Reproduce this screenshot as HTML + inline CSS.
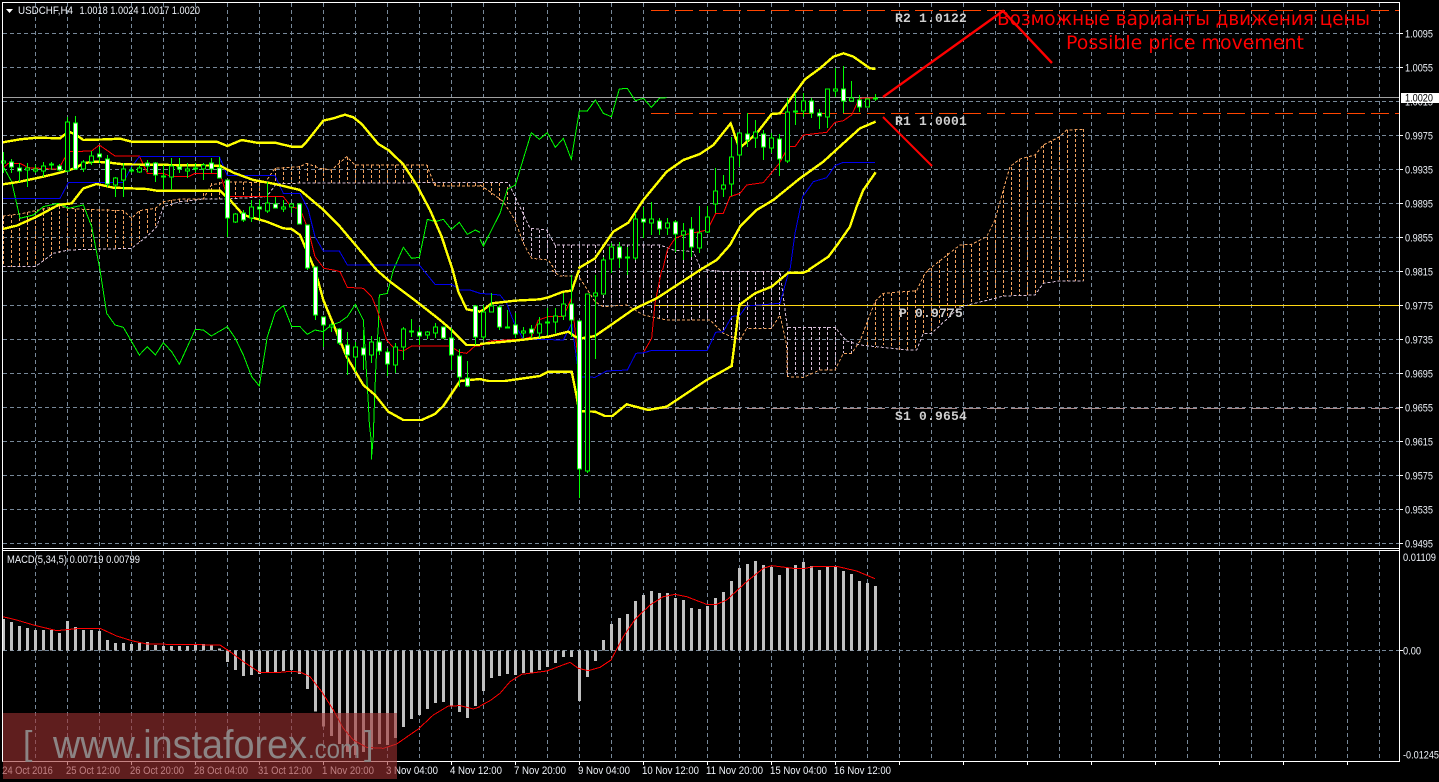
<!DOCTYPE html>
<html><head><meta charset="utf-8"><title>USDCHF,H4</title>
<style>
html,body{margin:0;padding:0;background:#000;width:1439px;height:782px;overflow:hidden}
svg{display:block}
polyline{fill:none;vector-effect:non-scaling-stroke;shape-rendering:crispEdges}
.y{stroke:#ff0;stroke-width:2.4}
.g{stroke:#0f0;stroke-width:1}
.r{stroke:#f00;stroke-width:1}
.b{stroke:#0000f0;stroke-width:1}
.o{stroke:#f4a460;stroke-width:1;stroke-dasharray:3 2}
.t{stroke:#d8bfd8;stroke-width:1;stroke-dasharray:3 2}
text{font-family:"Liberation Sans",Arial,sans-serif;font-size:11px;fill:#eef2f8}
.f{font-family:"Liberation Mono",monospace;font-weight:bold;font-size:13px;fill:#cfcfcf;letter-spacing:.2px}
.a{font-family:"DejaVu Sans","Liberation Sans",sans-serif;font-size:19px;fill:#f00}
</style></head><body>
<svg width="1439" height="782" viewBox="0 0 1439 782" xmlns="http://www.w3.org/2000/svg" shape-rendering="crispEdges">
<rect width="1439" height="782" fill="#000"/>

<!-- grid -->
<path fill="none" stroke="#778899" stroke-dasharray="4 3" d="M35.5 3V548M99.5 3V548M163.5 3V548M227.5 3V548M291.5 3V548M355.5 3V548M419.5 3V548M483.5 3V548M547.5 3V548M611.5 3V548M675.5 3V548M739.5 3V548M803.5 3V548M867.5 3V548M931.5 3V548M995.5 3V548M1059.5 3V548M1123.5 3V548M1187.5 3V548M1251.5 3V548M1315.5 3V548M1379.5 3V548M67.5 3V548M131.5 3V548M195.5 3V548M259.5 3V548M323.5 3V548M387.5 3V548M451.5 3V548M515.5 3V548M579.5 3V548M643.5 3V548M707.5 3V548M771.5 3V548M835.5 3V548M899.5 3V548M963.5 3V548M1027.5 3V548M1091.5 3V548M1155.5 3V548M1219.5 3V548M1283.5 3V548M1347.5 3V548
M35.5 551V761M99.5 551V761M163.5 551V761M227.5 551V761M291.5 551V761M355.5 551V761M419.5 551V761M483.5 551V761M547.5 551V761M611.5 551V761M675.5 551V761M739.5 551V761M803.5 551V761M867.5 551V761M931.5 551V761M995.5 551V761M1059.5 551V761M1123.5 551V761M1187.5 551V761M1251.5 551V761M1315.5 551V761M1379.5 551V761M67.5 551V761M131.5 551V761M195.5 551V761M259.5 551V761M323.5 551V761M387.5 551V761M451.5 551V761M515.5 551V761M579.5 551V761M643.5 551V761M707.5 551V761M771.5 551V761M835.5 551V761M899.5 551V761M963.5 551V761M1027.5 551V761M1091.5 551V761M1155.5 551V761M1219.5 551V761M1283.5 551V761M1347.5 551V761
M3 33.5H1399M3 67.5H1399M3 101.5H1399M3 135.5H1399M3 169.5H1399M3 203.5H1399M3 237.5H1399M3 271.5H1399M3 305.5H1399M3 339.5H1399M3 373.5H1399M3 407.5H1399M3 441.5H1399M3 475.5H1399M3 509.5H1399M3 543.5H1399M3 650.5H1399"/>

<!-- objects -->
<path stroke="#ff4500" fill="none" stroke-dasharray="18 6" d="M651 10.5H1399M651 113.5H1399"/>
<path stroke="#a88888" fill="none" stroke-dasharray="18 6" d="M651 408.5H1399"/>
<path stroke="#ffd815" fill="none" d="M655 305.5H1399"/>
<path stroke="#a0a0a0" fill="none" d="M3 97.5H1400"/>

<!-- cloud hatch -->
<path fill="none" stroke="#f4a460" stroke-dasharray="3 2" d="M3.5 216V267M11.5 215V267M19.5 213V267M27.5 212V267M35.5 211V267M43.5 208V263M51.5 207V258M59.5 206V253M67.5 208V250M75.5 209V250M83.5 209V250M91.5 209V250M99.5 209V250M107.5 209V249M115.5 210V249M123.5 211V248M131.5 218V248M139.5 211V242M147.5 210V235M155.5 208V227M163.5 201V207M171.5 200V206M179.5 199V204M187.5 199V202M195.5 199V201M203.5 193V199M211.5 183V199M219.5 182V199M227.5 182V199M235.5 182V198M243.5 182V197M251.5 183V197M259.5 183V197M267.5 183V197M275.5 168V183M283.5 167V183M291.5 167V183M299.5 166V183M307.5 163V183M315.5 165V183M323.5 168V183M331.5 170V183M339.5 160V183M347.5 157V183M355.5 165V183M363.5 165V183M371.5 165V183M379.5 165V183M387.5 165V183M395.5 165V183M403.5 165V183M411.5 165V183M419.5 165V183M427.5 165V183M435.5 183V186M443.5 183V186M451.5 183V186M459.5 183V186M467.5 183V186M475.5 183V186M483.5 183V190M491.5 183V195M499.5 183V200M507.5 187V203
M867.5 322V347M875.5 302V348M883.5 293V345M891.5 293V348M899.5 292V350M907.5 292V350M915.5 290V350M923.5 275V333M931.5 268V333M939.5 260V325M947.5 253V318M955.5 250V310M963.5 245V305M971.5 244V303M979.5 243V300M987.5 237V298M995.5 220V298M1003.5 190V296M1011.5 167V295M1019.5 159V295M1027.5 157V295M1035.5 155V295M1043.5 145V283M1051.5 141V281M1059.5 137V281M1067.5 130V281M1075.5 129V281M1083.5 129V281"/>
<path fill="none" stroke="#d8bfd8" stroke-dasharray="3 2" d="M515.5 197V220M523.5 207V243M531.5 228V258M539.5 230V260M547.5 230V260M555.5 245V276M563.5 245V276M571.5 245V276M579.5 245V278M587.5 245V285M595.5 245V302M603.5 245V307M611.5 245V306M619.5 245V305M627.5 245V305M635.5 245V310M643.5 245V315M651.5 245V315M659.5 245V318M667.5 250V320M675.5 250V320M683.5 250V320M691.5 252V320M699.5 265V320M707.5 270V320M715.5 270V322M723.5 272V332M731.5 272V338M739.5 272V340M747.5 272V328M755.5 272V328M763.5 272V328M771.5 272V328M779.5 272V315M787.5 327V377M795.5 327V377M803.5 327V377M811.5 327V372M819.5 327V370M827.5 327V370M835.5 327V370M843.5 341V353M851.5 341V353"/>

<!-- cloud borders -->
<g transform="scale(.33333)">
<polyline class="o" points="8,648 60,642 106,632 154,622 178,618 202,625 250,628 370,632 395,655 418,632 466,625 490,605 540,597 610,597 634,555 680,545 795,548 825,505 900,500 920,490 960,505 995,510 1040,470 1065,495 1280,495 1305,558 1440,558"/>
<polyline class="t" points="8,800 106,800 160,760 205,750 395,745 440,710 470,680 490,620 540,605 610,597 680,597 800,590 830,550 1305,548 1440,548"/>
</g>
<g transform="translate(480 0) scale(.33333)">
<polyline class="t" points="0,548 85,548 105,590 150,685 200,690 225,735 540,735 580,750 640,755 660,800 680,810"/>
<polyline class="o" points="0,555 30,575 70,605 105,660 130,730 155,775 205,780 225,810"/>
</g>
<g transform="translate(480 270) scale(.33333)">
<polyline class="o" points="215,0 240,18 275,18 300,25 345,95 370,110 440,105 490,135 560,150 690,150 730,190 780,210 800,175 875,175 900,135 920,225 922,320 970,322 1020,300 1065,300 1090,250 1115,250 1140,213 1185,95 1210,70 1310,62 1335,10 1345,0"/>
<polyline class="t" points="680,0 730,5 900,5 922,172 1065,172 1100,213 1140,225 1285,240 1310,240 1330,190 1355,190 1440,110"/>
</g>
<g transform="translate(960 0) scale(.33333)">
<polyline class="o" points="-96,810 0,735 35,733 80,710 105,660 130,570 150,500 180,477 225,465 250,435 300,410 320,390 370,388"/>
<polyline class="t" points="0,921 105,895 130,888 225,885 250,850 298,843 370,843"/>
</g>

<!-- chikou / kijun / tenkan / bollinger -->
<g transform="scale(.33333)">
<polyline class="g" points="8,455 10,500 35,545 60,655 100,645 130,620 175,610 205,625 250,615 275,680 300,810"/>
<polyline class="g" points="1180,810 1210,742 1235,775 1258,772 1282,658 1306,665 1330,658 1354,688 1378,667 1402,703 1426,690 1440,697"/>
<polyline class="r" points="8,505 25,490 60,490 85,503 175,508 205,455 275,453 298,435 345,468 418,468 442,520 490,520 515,530 565,530 585,520 660,520 682,590 850,590 875,622 900,625 925,690 945,770 972,805 1000,810"/>
<polyline class="b" points="8,595 180,595 205,548 370,547 395,500 418,470 658,470 682,527 825,527 850,580 900,580 925,630 945,710 970,753 1018,753 1042,795 1258,795 1270,810"/>
<polyline class="y" points="8,427 60,418 110,413 180,415 205,395 225,402 250,420 320,418 360,416 395,425 650,425 682,438 725,420 770,428 825,428 875,440 905,440 920,425 970,362 1000,355 1035,344 1060,352 1085,372 1135,432 1165,450 1210,493 1250,555 1290,630 1325,710 1358,810"/>
<polyline class="y" points="8,553 60,545 130,530 180,518 225,505 250,490 280,485 320,487 370,493 660,497 700,518 760,540 825,552 900,570 965,625 1020,680 1130,810"/>
<polyline class="y" points="8,687 50,677 110,650 175,615 215,610 250,565 290,552 340,563 440,567 470,572 660,572 690,600 730,645 800,665 850,685 875,687 900,705 945,810"/>
</g>
<g transform="translate(0 270) scale(.33333)">
<polyline class="g" points="300,0 320,130 345,165 370,172 418,255 442,230 466,255 490,218 515,245 538,283 586,178 610,180 634,198 682,170 706,205 730,255 755,320 778,348 802,200 826,127 850,107 875,170 900,170 922,193 945,180 970,185 994,165 1018,157 1042,140 1066,103 1090,150 1105,400 1108,460 1114,515 1114,568 1120,500 1122,435 1127,305 1130,240 1135,170 1138,75 1162,70 1180,0"/>
<polyline class="r" points="1000,0 1020,5 1042,52 1090,55 1115,80 1130,115 1160,210 1185,238 1210,243 1235,228 1350,228 1380,247 1400,250 1425,228 1440,228"/>
<polyline class="b" points="1270,0 1305,43 1355,43 1380,60 1410,60 1440,70"/>
<polyline class="y" points="1358,0 1375,65 1400,118 1440,125"/>
<polyline class="y" points="1130,0 1170,35 1250,95 1320,150 1355,180 1400,225 1440,225"/>
<polyline class="y" points="945,0 970,90 1040,260 1090,345 1125,375 1165,425 1210,450 1265,450 1305,432 1330,408 1380,333 1440,327"/>
</g>
<g transform="translate(480 0) scale(.33333)">
<polyline class="g" points="0,718 10,738 60,640 82,568 106,555 154,398 178,418 202,398 226,442 250,415 274,478 298,333 322,333 346,300 370,340 394,350 418,267 442,265 466,302 490,295 514,322 538,295 560,293"/>
<polyline class="r" points="548,810 562,750 585,715 610,705 682,690 707,640 730,640 750,590 780,580 800,555 850,548 898,490 925,440 945,440 970,405 1040,397 1065,367 1090,362 1115,345 1138,295 1187,293"/>
<polyline class="b" points="930,810 945,700 968,590 1000,545 1040,533 1065,497 1090,487 1185,487"/>
<polyline class="y" points="295,805 345,775 400,695 445,668 490,600 560,515 610,480 660,462 700,435 752,370 778,445 830,400 875,342 900,340 975,238 1020,205 1060,170 1090,160 1120,170 1170,205 1187,207"/>
<polyline class="y" points="660,810 710,780 750,735 780,680 830,630 880,600 960,535 1030,485 1090,430 1140,385 1187,365"/>
<polyline class="y" points="985,810 1045,770 1075,730 1110,680 1130,620 1150,570 1187,517"/>
</g>
<g transform="translate(480 270) scale(.33333)">
<polyline class="r" points="0,228 30,213 80,210 130,207 155,200 175,150 205,140 250,140 272,90 280,130 297,300"/>
<polyline class="r" points="490,248 515,205 525,100 545,0"/>
<polyline class="b" points="0,70 60,75 80,100 105,165 130,207 250,210 275,160 297,320 345,322 380,303 442,300 468,250 493,248 515,241 682,241 707,187 730,185 755,140 780,135 800,108 900,100 925,10 928,0"/>
<polyline class="y" points="0,125 10,120 35,100 105,92 180,88 205,82 250,65 275,62 297,0"/>
<polyline class="y" points="0,222 105,212 205,200 265,185 285,200 305,205 345,198 400,160 460,118 530,85 660,0"/>
<polyline class="y" points="0,327 25,333 75,333 130,325 180,318 205,305 275,305 290,380 297,423 345,425 375,438 397,438 440,403 505,420 560,410 620,370 680,330 755,288 765,210 778,105 825,70 875,50 925,8 970,8 990,0"/>
</g>

<!-- candle wicks -->
<path fill="none" stroke="#0f0" d="M3.5 152V173M11.5 159V173M19.5 163V182M27.5 163V187M35.5 165V173M43.5 162V177M51.5 162V170M59.5 164V171M67.5 117V172M75.5 116V170M83.5 160V172M91.5 151V165M99.5 147V163M107.5 155V187M115.5 177V197M123.5 163V197M131.5 167V173M139.5 165V173M147.5 160V172M155.5 162V182M163.5 165V190M171.5 158V190M179.5 158V173M187.5 163V178M195.5 163V172M203.5 163V180M211.5 158V173M219.5 157V178M227.5 180V237M235.5 213V223M243.5 210V222M251.5 200V222M259.5 200V220M267.5 182V213M275.5 197V208M283.5 200V212M291.5 203V213M299.5 203V224M307.5 225V270M315.5 267V320M323.5 317V347M331.5 323V332M339.5 328V345M347.5 332V375M355.5 342V372M363.5 330V370M371.5 336V363M379.5 337V355M387.5 348V376M395.5 343V373M403.5 327V360M411.5 319V337M419.5 327V345M427.5 331V339M435.5 323V338M443.5 327V339M451.5 328V370M459.5 349V387M467.5 361V387M475.5 305V345M483.5 305V340M491.5 293V312M499.5 305V330M507.5 310V328M515.5 313V338M523.5 327V338M531.5 325V338M539.5 317V338M547.5 308V335M555.5 308V333M563.5 293V320M571.5 275V337M579.5 320V498M587.5 294V473M595.5 275V359M603.5 257V294M611.5 243V273M619.5 242V268M627.5 247V275M635.5 213V260M643.5 207V238M651.5 202V235M659.5 218V235M667.5 218V235M675.5 220V252M683.5 223V260M691.5 217V257M699.5 206V253M707.5 206V233M715.5 168V213M723.5 175V197M731.5 137V196M739.5 133V167M747.5 113V147M755.5 120V148M763.5 130V160M771.5 133V153M779.5 134V176M787.5 98V163M795.5 93V125M803.5 93V117M811.5 98V118M819.5 109V129M827.5 89V128M835.5 68V97M843.5 66V113M851.5 81V102M859.5 95V112M867.5 98V107M875.5 94V101"/>
<!-- hollow bodies -->
<path fill="#000" stroke="#0f0" d="M1.5 161h4V163h-4zM25.5 168h4V170h-4zM33.5 169h4V171h-4zM41.5 166h4V171h-4zM49.5 164h4V165h-4zM65.5 122h4V171h-4zM81.5 162h4V169h-4zM89.5 156h4V162h-4zM113.5 178h4V185h-4zM121.5 169h4V180h-4zM129.5 170h4V171h-4zM137.5 168h4V172h-4zM161.5 176h4V177h-4zM169.5 166h4V177h-4zM185.5 169h4V171h-4zM193.5 168h4V169h-4zM201.5 165h4V169h-4zM233.5 214h4V222h-4zM249.5 207h4V218h-4zM265.5 203h4V211h-4zM281.5 207h4V209h-4zM289.5 204h4V207h-4zM329.5 325h4V327h-4zM353.5 347h4V357h-4zM369.5 342h4V355h-4zM393.5 347h4V365h-4zM401.5 329h4V347h-4zM409.5 331h4V332h-4zM425.5 332h4V335h-4zM433.5 327h4V333h-4zM481.5 312h4V337h-4zM489.5 306h4V312h-4zM505.5 327h4V328h-4zM521.5 331h4V333h-4zM537.5 324h4V333h-4zM545.5 322h4V323h-4zM553.5 316h4V322h-4zM561.5 304h4V316h-4zM585.5 294h4V471h-4zM593.5 293h4V296h-4zM601.5 260h4V294h-4zM609.5 247h4V259h-4zM625.5 257h4V258h-4zM633.5 219h4V258h-4zM649.5 219h4V223h-4zM665.5 223h4V228h-4zM681.5 231h4V235h-4zM697.5 233h4V248h-4zM705.5 217h4V232h-4zM713.5 191h4V204h-4zM721.5 185h4V189h-4zM729.5 157h4V184h-4zM737.5 133h4V155h-4zM753.5 132h4V138h-4zM769.5 138h4V148h-4zM785.5 112h4V161h-4zM793.5 111h4V112h-4zM801.5 101h4V111h-4zM825.5 89h4V117h-4zM833.5 89h4V91h-4zM849.5 98h4V101h-4zM865.5 99h4V107h-4zM873.5 98h4V99h-4z"/>
<!-- filled bodies -->
<path fill="#fff" stroke="#0f0" d="M9.5 162h4V167h-4zM17.5 168h4V171h-4zM57.5 166h4V170h-4zM73.5 123h4V169h-4zM97.5 154h4V157h-4zM105.5 159h4V184h-4zM145.5 163h4V166h-4zM153.5 163h4V175h-4zM177.5 167h4V169h-4zM209.5 163h4V169h-4zM217.5 168h4V178h-4zM225.5 180h4V218h-4zM241.5 213h4V220h-4zM257.5 207h4V209h-4zM273.5 204h4V208h-4zM297.5 204h4V224h-4zM305.5 225h4V268h-4zM313.5 267h4V315h-4zM321.5 317h4V325h-4zM337.5 329h4V343h-4zM345.5 345h4V355h-4zM361.5 348h4V355h-4zM377.5 342h4V351h-4zM385.5 352h4V364h-4zM417.5 332h4V336h-4zM441.5 327h4V338h-4zM449.5 338h4V355h-4zM457.5 356h4V377h-4zM465.5 378h4V386h-4zM473.5 306h4V337h-4zM497.5 307h4V327h-4zM513.5 325h4V334h-4zM529.5 329h4V333h-4zM569.5 304h4V320h-4zM577.5 321h4V469h-4zM617.5 247h4V258h-4zM641.5 219h4V222h-4zM657.5 221h4V229h-4zM673.5 222h4V234h-4zM689.5 229h4V247h-4zM745.5 134h4V140h-4zM761.5 134h4V147h-4zM777.5 139h4V159h-4zM809.5 101h4V113h-4zM817.5 113h4V116h-4zM841.5 89h4V101h-4zM857.5 100h4V107h-4z"/>

<!-- red arrows -->
<g shape-rendering="auto">
<path fill="none" stroke="#f00" stroke-width="2.4" d="M883 97L1003 11L1052 63"/>
<path fill="none" stroke="#f00" stroke-width="2" d="M883 117L932 166"/>
</g>

<!-- MACD histogram -->
<g transform="translate(0 540) scale(.33333)">
<path fill="none" stroke="#c0c0c0" stroke-width="3" style="vector-effect:non-scaling-stroke" d="M10.5 331V237M34.5 331V246M58.5 331V258M82.5 331V264M106.5 331V270M130.5 331V270M154.5 331V270M178.5 331V279M202.5 331V243M226.5 331V261M250.5 331V270M274.5 331V270M298.5 331V273M322.5 331V300M346.5 331V309M370.5 331V309M394.5 331V312M418.5 331V309M442.5 331V306M466.5 331V315M490.5 331V318M514.5 331V318M538.5 331V318M562.5 331V318M586.5 331V315M610.5 331V312M634.5 331V315M658.5 331V325M682.5 331V366M706.5 331V390M730.5 331V408M754.5 331V405M778.5 331V402M802.5 331V399M826.5 331V396M850.5 331V393M874.5 331V390M898.5 331V402M922.5 331V447M946.5 331V514M970.5 331V560M994.5 331V588M1018.5 331V612M1042.5 331V636M1066.5 331V645M1090.5 331V636M1114.5 331V628M1138.5 331V612M1162.5 331V615M1186.5 331V594M1210.5 331V561M1234.5 331V537M1258.5 331V525M1282.5 331V507M1306.5 331V489M1330.5 331V486M1354.5 331V497M1378.5 331V516M1402.5 331V534M1426.5 331V498"/>
<polyline class="r" points="8,230 50,240 100,255 170,272 210,268 240,265 300,265 350,288 395,302 440,312 660,315 690,335 730,365 780,398 830,398 870,394 900,396 930,410 965,455 1000,510 1030,565 1060,600 1100,622 1150,625 1190,612 1255,567 1300,525 1345,498 1380,497 1420,507 1440,500"/>
</g>
<g transform="translate(480 540) scale(.33333)">
<path fill="none" stroke="#c0c0c0" stroke-width="3" style="vector-effect:non-scaling-stroke" d="M10.5 331V453M34.5 331V414M58.5 331V408M82.5 331V402M106.5 331V405M130.5 331V399M154.5 331V399M178.5 331V390M202.5 331V381M226.5 331V369M250.5 331V351M274.5 331V351M298.5 331V483M322.5 331V411M346.5 331V363M370.5 331V300M394.5 331V252M418.5 331V234M442.5 331V222M466.5 331V183M490.5 331V165M514.5 331V153M538.5 331V159M562.5 331V159M586.5 331V174M610.5 331V180M634.5 331V204M658.5 331V207M682.5 331V198M706.5 331V174M730.5 331V156M754.5 331V123M778.5 331V84M802.5 331V72M826.5 331V63M850.5 331V75M874.5 331V81M898.5 331V105M922.5 331V84M946.5 331V75M970.5 331V66M994.5 331V78M1018.5 331V90M1042.5 331V81M1066.5 331V78M1090.5 331V93M1114.5 331V102M1138.5 331V123M1162.5 331V129M1186.5 331V138"/>
<polyline class="r" points="0,498 30,482 60,460 90,425 125,403 200,393 270,367 295,385 325,392 360,382 393,360 430,290 465,238 510,195 550,170 585,163 620,170 680,193 710,193 740,180 800,125 850,85 875,77 940,85 975,85 1005,79 1070,79 1130,93 1185,116"/>
</g>

<!-- frames -->
<path fill="none" stroke="#fff" d="M2.5 761.5V2.5H1399.5V761.5H2.5M2.5 548.5H1399.5M2.5 550.5H1399.5"/>
<path fill="none" stroke="#fff" d="M1400 33.5h3M1400 67.5h3M1400 135.5h3M1400 169.5h3M1400 203.5h3M1400 237.5h3M1400 271.5h3M1400 305.5h3M1400 339.5h3M1400 373.5h3M1400 407.5h3M1400 441.5h3M1400 475.5h3M1400 509.5h3M1400 543.5h3M1400 650.5h3M67.5 762v3M131.5 762v3M195.5 762v3M259.5 762v3M323.5 762v3M387.5 762v3M451.5 762v3M515.5 762v3M579.5 762v3M643.5 762v3M707.5 762v3M771.5 762v3M835.5 762v3M899.5 762v3M963.5 762v3M1027.5 762v3M1091.5 762v3M1155.5 762v3M1219.5 762v3M1283.5 762v3M1347.5 762v3"/>
<path fill="#fff" d="M6 9h7l-3.5 4z" shape-rendering="auto"/>

<!-- header text -->
<g shape-rendering="auto">
<text x="18" y="14" textLength="55" lengthAdjust="spacingAndGlyphs">USDCHF,H4</text>
<text x="79.5" y="14" textLength="120.5" lengthAdjust="spacingAndGlyphs">1.0018 1.0024 1.0017 1.0020</text>
<text x="7" y="563" textLength="133" lengthAdjust="spacingAndGlyphs">MACD(5,34,5) 0.00719 0.00799</text>

<!-- price axis -->
<text x="1405" y="37.5" textLength="28" lengthAdjust="spacingAndGlyphs">1.0095</text>
<text x="1405" y="71.5" textLength="28" lengthAdjust="spacingAndGlyphs">1.0055</text>
<text x="1405" y="105.5" textLength="28" lengthAdjust="spacingAndGlyphs">1.0015</text>
<rect x="1401" y="93" width="38" height="10" fill="#fff"/>
<text x="1405" y="101.5" textLength="28" lengthAdjust="spacingAndGlyphs" style="fill:#000">1.0020</text>
<text x="1405" y="139.5" textLength="28" lengthAdjust="spacingAndGlyphs">0.9975</text>
<text x="1405" y="173.5" textLength="28" lengthAdjust="spacingAndGlyphs">0.9935</text>
<text x="1405" y="207.5" textLength="28" lengthAdjust="spacingAndGlyphs">0.9895</text>
<text x="1405" y="241.5" textLength="28" lengthAdjust="spacingAndGlyphs">0.9855</text>
<text x="1405" y="275.5" textLength="28" lengthAdjust="spacingAndGlyphs">0.9815</text>
<text x="1405" y="309.5" textLength="28" lengthAdjust="spacingAndGlyphs">0.9775</text>
<text x="1405" y="343.5" textLength="28" lengthAdjust="spacingAndGlyphs">0.9735</text>
<text x="1405" y="377.5" textLength="28" lengthAdjust="spacingAndGlyphs">0.9695</text>
<text x="1405" y="411.5" textLength="28" lengthAdjust="spacingAndGlyphs">0.9655</text>
<text x="1405" y="445.5" textLength="28" lengthAdjust="spacingAndGlyphs">0.9615</text>
<text x="1405" y="479.5" textLength="28" lengthAdjust="spacingAndGlyphs">0.9575</text>
<text x="1405" y="513.5" textLength="28" lengthAdjust="spacingAndGlyphs">0.9535</text>
<text x="1405" y="547.5" textLength="28" lengthAdjust="spacingAndGlyphs">0.9495</text>
<text x="1403" y="561" textLength="33" lengthAdjust="spacingAndGlyphs">0.01109</text>
<text x="1403" y="654.5" textLength="18" lengthAdjust="spacingAndGlyphs">0.00</text>
<text x="1403" y="758.5" textLength="36" lengthAdjust="spacingAndGlyphs">-0.01245</text>

<!-- time axis -->
<text x="2.3" y="774" textLength="50.5" lengthAdjust="spacingAndGlyphs">24 Oct 2016</text>
<text x="66" y="774" textLength="54" lengthAdjust="spacingAndGlyphs">25 Oct 12:00</text>
<text x="130" y="774" textLength="54" lengthAdjust="spacingAndGlyphs">26 Oct 20:00</text>
<text x="194" y="774" textLength="54" lengthAdjust="spacingAndGlyphs">28 Oct 04:00</text>
<text x="258" y="774" textLength="54" lengthAdjust="spacingAndGlyphs">31 Oct 12:00</text>
<text x="322" y="774" textLength="52" lengthAdjust="spacingAndGlyphs">1 Nov 20:00</text>
<text x="386" y="774" textLength="52" lengthAdjust="spacingAndGlyphs">3 Nov 04:00</text>
<text x="450" y="774" textLength="52" lengthAdjust="spacingAndGlyphs">4 Nov 12:00</text>
<text x="514" y="774" textLength="52" lengthAdjust="spacingAndGlyphs">7 Nov 20:00</text>
<text x="578" y="774" textLength="52" lengthAdjust="spacingAndGlyphs">9 Nov 04:00</text>
<text x="642" y="774" textLength="57" lengthAdjust="spacingAndGlyphs">10 Nov 12:00</text>
<text x="706" y="774" textLength="57" lengthAdjust="spacingAndGlyphs">11 Nov 20:00</text>
<text x="770" y="774" textLength="57" lengthAdjust="spacingAndGlyphs">15 Nov 04:00</text>
<text x="834" y="774" textLength="57" lengthAdjust="spacingAndGlyphs">16 Nov 12:00</text>

<!-- pivot labels -->
<text class="f" x="895" y="22" textLength="72">R2 1.0122</text>
<text class="f" x="895" y="125" textLength="72">R1 1.0001</text>
<text class="f" x="899" y="317" textLength="64">P 0.9775</text>
<text class="f" x="895" y="420" textLength="72">S1 0.9654</text>

<!-- annotation -->
<text class="a" x="997" y="25" textLength="373" lengthAdjust="spacingAndGlyphs">Возможные варианты движения цены</text>
<text class="a" x="1066" y="49" textLength="238" lengthAdjust="spacingAndGlyphs">Possible price movement</text>

<!-- watermark -->
<rect x="3" y="713" width="394" height="66" fill="#9e3232" fill-opacity=".6"/>
<text x="23" y="755" style="font-size:34px;fill:#8c8484">[</text>
<text x="53" y="758" textLength="254" lengthAdjust="spacingAndGlyphs" style="font-size:40px;fill:#8c8484">www.instaforex</text>
<text x="308" y="758" textLength="52" lengthAdjust="spacingAndGlyphs" style="font-size:27px;fill:#8c8484">.com</text>
<text x="364" y="755" style="font-size:34px;fill:#8c8484">]</text>
</g>
</svg>
</body></html>
